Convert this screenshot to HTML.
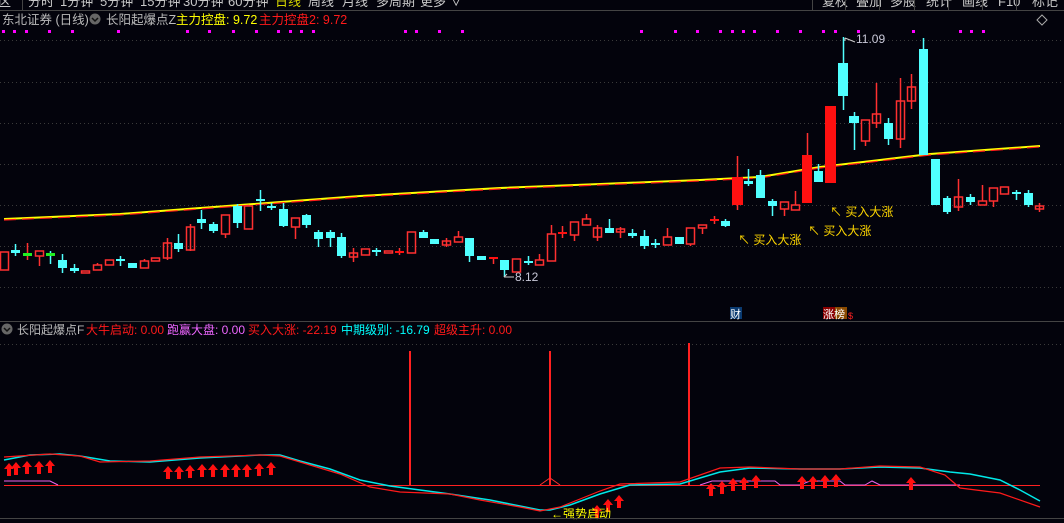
<!DOCTYPE html>
<html><head><meta charset="utf-8"><style>
body{margin:0;background:#03030c;width:1064px;height:523px;overflow:hidden;font-family:"Liberation Sans","Noto Sans CJK SC",sans-serif}
svg{display:block}
text{font-family:"Liberation Sans","Noto Sans CJK SC",sans-serif}
</style></head><body>
<svg width="1064" height="523" viewBox="0 0 1064 523" xmlns="http://www.w3.org/2000/svg">
<defs><path id="ar" d="M0 0l5 6h-3v7h-4v-7h-3z" fill="#ff1010"/></defs>
<rect width="1064" height="523" fill="#03030c"/>
<g font-size="13" fill="#c8c8c8">
<text x="-2" y="6">区</text><text x="28" y="6">分时</text><text x="60" y="6">1分钟</text><text x="100" y="6">5分钟</text><text x="140" y="6">15分钟</text><text x="183" y="6">30分钟</text><text x="228" y="6">60分钟</text><text x="275" y="6" fill="#d4d400">日线</text><text x="308" y="6">周线</text><text x="342" y="6">月线</text><text x="376" y="6">多周期</text><text x="420" y="6">更多 ∨</text>
<text x="822" y="6">复权</text><text x="856" y="6">叠加</text><text x="890" y="6">多股</text><text x="926" y="6">统计</text><text x="962" y="6">画线</text><text x="998" y="6">F10</text><text x="1032" y="6">标记</text>
</g>
<g stroke="#444" stroke-width="1"><line x1="0" y1="10.5" x2="1064" y2="10.5"/><line x1="22.5" y1="0" x2="22.5" y2="10"/><line x1="812.5" y1="0" x2="812.5" y2="10"/><line x1="845.5" y1="0" x2="845.5" y2="10"/><line x1="879.5" y1="0" x2="879.5" y2="10"/><line x1="914.5" y1="0" x2="914.5" y2="10"/><line x1="948.5" y1="0" x2="948.5" y2="10"/><line x1="982.5" y1="0" x2="982.5" y2="10"/><line x1="1016.5" y1="0" x2="1016.5" y2="10"/></g>
<g font-size="12.5">
<text x="2" y="24" fill="#bbb">东北证券 (日线)</text>
<circle cx="95" cy="19" r="5.5" fill="#666"/><path d="M92 18l3 3 3-3" stroke="#111" stroke-width="1.5" fill="none"/>
<text x="106" y="24" fill="#bbb">长阳起爆点Z</text>
<text x="176" y="24" fill="#ffff00">主力控盘: 9.72</text>
<text x="259" y="24" fill="#ff1a1a">主力控盘2: 9.72</text>
</g>
<path d="M1042 15l5 5-5 5-5-5z" stroke="#aaa" fill="none"/>
<g fill="#ff00ff">
<rect x="2" y="30" width="3" height="3"/><rect x="13" y="30" width="3" height="3"/><rect x="25" y="30" width="3" height="3"/><rect x="48" y="30" width="3" height="3"/><rect x="71" y="30" width="3" height="3"/><rect x="117" y="30" width="3" height="3"/><rect x="186" y="30" width="3" height="3"/><rect x="208" y="30" width="3" height="3"/><rect x="232" y="30" width="3" height="3"/><rect x="255" y="30" width="3" height="3"/><rect x="277" y="30" width="3" height="3"/><rect x="289" y="30" width="3" height="3"/><rect x="300" y="30" width="3" height="3"/><rect x="312" y="30" width="3" height="3"/><rect x="404" y="30" width="3" height="3"/><rect x="415" y="30" width="3" height="3"/><rect x="438" y="30" width="3" height="3"/><rect x="461" y="30" width="3" height="3"/>
<rect x="640" y="30" width="3" height="3"/><rect x="674" y="30" width="3" height="3"/><rect x="696" y="30" width="3" height="3"/><rect x="719" y="30" width="3" height="3"/><rect x="731" y="30" width="3" height="3"/><rect x="742" y="30" width="3" height="3"/><rect x="753" y="30" width="3" height="3"/><rect x="776" y="30" width="3" height="3"/><rect x="799" y="30" width="3" height="3"/><rect x="822" y="30" width="3" height="3"/><rect x="834" y="30" width="3" height="3"/><rect x="857" y="30" width="3" height="3"/><rect x="912" y="30" width="3" height="3"/><rect x="959" y="30" width="3" height="3"/><rect x="970" y="30" width="3" height="3"/><rect x="982" y="30" width="3" height="3"/>
</g>
<g stroke="#3a3a3a" stroke-dasharray="1 3"><line x1="0" y1="40.5" x2="1064" y2="40.5"/><line x1="0" y1="82.5" x2="1064" y2="82.5"/><line x1="0" y1="123.5" x2="1064" y2="123.5"/><line x1="0" y1="164.5" x2="1064" y2="164.5"/><line x1="0" y1="205.5" x2="1064" y2="205.5"/><line x1="0" y1="246.5" x2="1064" y2="246.5"/><line x1="0" y1="287.5" x2="1064" y2="287.5"/><line x1="0" y1="344.5" x2="1064" y2="344.5"/></g>
<polyline points="4,219 120,214 240,205 360,196 500,188 600,184 700,180 760,177 820,167 880,160 930,154 1040,146" stroke="#ffff00" stroke-width="2" fill="none"/>
<polyline points="4,220 120,215 240,206 360,197 500,189 600,185 700,181 760,178 820,168 880,161 930,155 1040,147" stroke="#ff1a1a" stroke-width="1.2" fill="none" stroke-dasharray="12 6"/>
<g stroke-width="1.5" fill="none">
<g stroke="#ff3030">
<rect x="0.5" y="252" width="8" height="18"/>
<line x1="27.5" y1="243" x2="27.5" y2="260"/>
<rect x="35.5" y="251" width="8" height="5"/><line x1="39.5" y1="256" x2="39.5" y2="266"/>
<rect x="81.5" y="271" width="8" height="2"/>
<rect x="93.5" y="265" width="8" height="5"/><line x1="97.5" y1="263" x2="97.5" y2="265"/>
<rect x="105.5" y="260" width="8" height="5"/>
<rect x="140.5" y="261" width="8" height="7"/><line x1="144.5" y1="259" x2="144.5" y2="261"/>
<rect x="151.5" y="258" width="8" height="3"/>
<rect x="163.5" y="243" width="8" height="15"/><line x1="167.5" y1="238" x2="167.5" y2="260"/>
<rect x="186.5" y="227" width="8" height="23"/><line x1="190.5" y1="224" x2="190.5" y2="251"/>
<rect x="221.5" y="215" width="8" height="19"/><line x1="225.5" y1="234" x2="225.5" y2="238"/>
<rect x="244.5" y="206" width="8" height="23"/>
<rect x="291.5" y="218" width="8" height="9"/><line x1="295.5" y1="227" x2="295.5" y2="239"/>
<rect x="349.5" y="253" width="8" height="4"/><line x1="353.5" y1="248" x2="353.5" y2="262"/>
<rect x="361.5" y="249" width="8" height="6"/>
<rect x="384.5" y="251" width="8" height="2"/>
<line x1="399.5" y1="248" x2="399.5" y2="255"/>
<rect x="407.5" y="232" width="8" height="21"/>
<rect x="442.5" y="241" width="8" height="4"/><line x1="446.5" y1="238" x2="446.5" y2="247"/>
<rect x="454.5" y="237" width="8" height="5"/><line x1="458.5" y1="231" x2="458.5" y2="237"/>
<line x1="493.5" y1="259" x2="493.5" y2="264"/>
<rect x="512.5" y="259" width="8" height="13"/>
<rect x="535.5" y="260" width="8" height="5"/><line x1="539.5" y1="254" x2="539.5" y2="260"/>
<rect x="547.5" y="234" width="8" height="27"/><line x1="551.5" y1="225" x2="551.5" y2="234"/>
<line x1="562.5" y1="226" x2="562.5" y2="238"/>
<rect x="570.5" y="222" width="8" height="13"/><line x1="574.5" y1="235" x2="574.5" y2="241"/>
<rect x="582.5" y="219" width="8" height="6"/><line x1="586.5" y1="214" x2="586.5" y2="219"/>
<rect x="593.5" y="228" width="8" height="9"/><line x1="597.5" y1="225" x2="597.5" y2="241"/>
<rect x="616.5" y="229" width="8" height="3"/><line x1="620.5" y1="227" x2="620.5" y2="238"/>
<rect x="663.5" y="237" width="8" height="8"/><line x1="667.5" y1="228" x2="667.5" y2="237"/>
<rect x="686.5" y="228" width="8" height="16"/><line x1="690.5" y1="244" x2="690.5" y2="246"/>
<rect x="698.5" y="225" width="8" height="3"/><line x1="702.5" y1="228" x2="702.5" y2="234"/>
<line x1="714.5" y1="216" x2="714.5" y2="224"/>
<line x1="737.5" y1="156" x2="737.5" y2="210"/>
<rect x="780.5" y="202" width="8" height="7"/><line x1="784.5" y1="209" x2="784.5" y2="216"/>
<rect x="791.5" y="205" width="8" height="5"/><line x1="795.5" y1="191" x2="795.5" y2="205"/>
<line x1="807.5" y1="133" x2="807.5" y2="155"/>
<rect x="861.5" y="120" width="8" height="21"/><line x1="865.5" y1="141" x2="865.5" y2="146"/>
<rect x="872.5" y="114" width="8" height="9"/><line x1="876.5" y1="83" x2="876.5" y2="128"/>
<rect x="896.5" y="101" width="8" height="38"/><line x1="900.5" y1="78" x2="900.5" y2="148"/>
<rect x="907.5" y="87" width="8" height="14"/><line x1="911.5" y1="74" x2="911.5" y2="109"/>
<rect x="954.5" y="197" width="8" height="10"/><line x1="958.5" y1="179" x2="958.5" y2="211"/>
<rect x="978.5" y="201" width="8" height="4"/><line x1="982.5" y1="185" x2="982.5" y2="201"/>
<rect x="989.5" y="188" width="8" height="13"/><line x1="993.5" y1="201" x2="993.5" y2="207"/>
<rect x="1000.5" y="187" width="8" height="7"/>
<rect x="1035.5" y="206" width="8" height="3"/><line x1="1039.5" y1="203" x2="1039.5" y2="212"/>
</g>
<g stroke="#50ffff">
<line x1="15.5" y1="244" x2="15.5" y2="256"/><line x1="50.5" y1="251" x2="50.5" y2="264"/><line x1="62.5" y1="254" x2="62.5" y2="273"/><line x1="74.5" y1="264" x2="74.5" y2="273"/><line x1="120.5" y1="256" x2="120.5" y2="266"/><line x1="178.5" y1="234" x2="178.5" y2="252"/><line x1="201.5" y1="210" x2="201.5" y2="229"/><line x1="213.5" y1="222" x2="213.5" y2="233"/><line x1="237.5" y1="204" x2="237.5" y2="228"/><line x1="260.5" y1="190" x2="260.5" y2="211"/><line x1="271.5" y1="203" x2="271.5" y2="210"/><line x1="283.5" y1="203" x2="283.5" y2="227"/><line x1="306.5" y1="214" x2="306.5" y2="228"/><line x1="318.5" y1="230" x2="318.5" y2="247"/><line x1="330.5" y1="230" x2="330.5" y2="247"/><line x1="341.5" y1="233" x2="341.5" y2="258"/><line x1="376.5" y1="248" x2="376.5" y2="256"/><line x1="423.5" y1="230" x2="423.5" y2="238"/><line x1="469.5" y1="238" x2="469.5" y2="262"/><line x1="504.5" y1="260" x2="504.5" y2="277"/><line x1="528.5" y1="256" x2="528.5" y2="265"/><line x1="609.5" y1="219" x2="609.5" y2="233"/><line x1="632.5" y1="229" x2="632.5" y2="238"/><line x1="644.5" y1="230" x2="644.5" y2="249"/><line x1="655.5" y1="239" x2="655.5" y2="248"/><line x1="725.5" y1="219" x2="725.5" y2="227"/><line x1="748.5" y1="169" x2="748.5" y2="186"/><line x1="760.5" y1="170" x2="760.5" y2="198"/><line x1="772.5" y1="199" x2="772.5" y2="216"/><line x1="818.5" y1="164" x2="818.5" y2="182"/><line x1="843.5" y1="37" x2="843.5" y2="110"/><line x1="854.5" y1="112" x2="854.5" y2="150"/><line x1="888.5" y1="118" x2="888.5" y2="145"/><line x1="923.5" y1="38" x2="923.5" y2="155"/><line x1="947.5" y1="196" x2="947.5" y2="214"/><line x1="970.5" y1="194" x2="970.5" y2="205"/><line x1="1016.5" y1="190" x2="1016.5" y2="200"/><line x1="1028.5" y1="190" x2="1028.5" y2="207"/>
</g>
</g>
<g fill="#50ffff">
<rect x="11" y="250" width="9" height="3"/><rect x="58" y="260" width="9" height="8"/><rect x="70" y="268" width="9" height="3"/><rect x="116" y="259" width="9" height="2"/><rect x="128" y="263" width="9" height="5"/><rect x="174" y="243" width="9" height="6"/><rect x="197" y="219" width="9" height="4"/><rect x="209" y="224" width="9" height="7"/><rect x="233" y="206" width="9" height="17"/><rect x="256" y="199" width="9" height="2"/><rect x="267" y="206" width="9" height="2"/><rect x="279" y="209" width="9" height="17"/><rect x="302" y="215" width="9" height="10"/><rect x="314" y="232" width="9" height="7"/><rect x="326" y="232" width="9" height="6"/><rect x="337" y="237" width="9" height="19"/><rect x="372" y="250" width="9" height="2"/><rect x="419" y="232" width="9" height="6"/><rect x="430" y="239" width="9" height="5"/><rect x="465" y="238" width="9" height="18"/><rect x="477" y="256" width="9" height="4"/><rect x="500" y="260" width="9" height="10"/><rect x="524" y="261" width="9" height="2"/><rect x="605" y="228" width="9" height="5"/><rect x="628" y="233" width="9" height="3"/><rect x="640" y="236" width="9" height="10"/><rect x="651" y="243" width="9" height="2"/><rect x="675" y="237" width="9" height="7"/><rect x="721" y="221" width="9" height="5"/><rect x="744" y="181" width="9" height="3"/><rect x="756" y="175" width="9" height="23"/><rect x="768" y="201" width="9" height="5"/><rect x="814" y="171" width="9" height="11"/><rect x="838" y="63" width="10" height="33"/><rect x="849" y="116" width="10" height="7"/><rect x="884" y="123" width="9" height="16"/><rect x="919" y="49" width="9" height="106"/><rect x="931" y="159" width="9" height="46"/><rect x="943" y="198" width="8" height="14"/><rect x="966" y="197" width="9" height="5"/><rect x="1012" y="192" width="9" height="2"/><rect x="1024" y="193" width="9" height="12"/>
</g>
<g fill="#22ee22"><rect x="23" y="253" width="9" height="3"/><rect x="46" y="253" width="9" height="3"/></g>
<g fill="#ff1010"><rect x="395" y="251" width="9" height="2"/><rect x="489" y="257" width="9" height="2"/><rect x="558" y="232" width="9" height="2"/><rect x="710" y="219" width="9" height="2"/><rect x="732" y="177" width="11" height="28"/><rect x="802" y="155" width="10" height="48"/><rect x="825" y="106" width="11" height="77"/></g>
<g font-size="12" fill="#c8c8d8"><text x="856" y="43">11.09</text><text x="515" y="281">8.12</text></g>
<path d="M845 38l10 4M845 38v3M504 277h10M504 277l3-3" stroke="#ccc" fill="none"/>
<g font-size="12" fill="#ffd700"><text x="738" y="244">↖ 买入大涨</text><text x="808" y="235">↖ 买入大涨</text><text x="830" y="216">↖ 买入大涨</text></g>
<rect x="730" y="307" width="12" height="12" fill="#0a3a70"/><text x="730" y="318" font-size="11" fill="#fff">财</text>
<rect x="823" y="307" width="12" height="12" fill="#8a0000"/><rect x="835" y="307" width="12" height="12" fill="#8a4a00"/><text x="823" y="318" font-size="11" fill="#fff">涨榜</text><text x="848" y="319" font-size="9" fill="#ff2020">$</text>
<line x1="0" y1="321.5" x2="1064" y2="321.5" stroke="#444"/>
<g font-size="12">
<circle cx="7" cy="329" r="5.5" fill="#666"/><path d="M4 328l3 3 3-3" stroke="#111" stroke-width="1.5" fill="none"/>
<text x="17" y="334" fill="#bbb">长阳起爆点F</text>
<text x="86" y="334" fill="#ff1a1a">大牛启动: 0.00</text>
<text x="167" y="334" fill="#ee66ff">跑赢大盘: 0.00</text>
<text x="248" y="334" fill="#ff1a1a">买入大涨: -22.19</text>
<text x="341" y="334" fill="#00ffff">中期级别: -16.79</text>
<text x="434" y="334" fill="#ff1a1a">超级主升: 0.00</text>
</g>
<line x1="4" y1="485.5" x2="1040" y2="485.5" stroke="#ff2020"/>
<g stroke="#ff2020" stroke-width="2"><line x1="410" y1="351" x2="410" y2="485"/><line x1="550" y1="351" x2="550" y2="485"/><line x1="689" y1="343" x2="689" y2="485"/></g>
<path d="M540 485l10-7 10 7" stroke="#ff3030" fill="none"/>
<polyline points="4,481 50,481 58,485" stroke="#ee66ee" fill="none"/>
<polyline points="700,485 712,481 775,481 780,485 800,485 810,481 840,481 845,485 865,485 872,481 880,485 960,485" stroke="#ee66ee" fill="none"/>
<polyline points="4,460 30,455 60,454 80,456 110,461 150,462 200,458 260,455 280,455 300,461 330,469 360,480 390,486 420,490 450,494 490,500 520,506 540,510 550,510 570,505 600,494 630,485 680,484 720,472 750,468 800,469 840,469 880,467 920,468 950,472 970,474 1000,480 1020,490 1040,501" stroke="#00e8e8" stroke-width="1.5" fill="none"/>
<polyline points="4,457 50,454 80,456 100,462 150,461 200,457 260,455 280,456 300,462 340,474 370,487 400,492 450,494 480,500 520,507 540,511 560,507 600,491 620,484 680,482 720,468 750,467 800,469 840,469 880,466 920,467 945,475 960,488 1000,493 1040,507" stroke="#ff1a1a" stroke-width="1.2" fill="none"/>
<g>
<use href="#ar" x="9" y="463"/><use href="#ar" x="16" y="462"/><use href="#ar" x="27" y="461"/><use href="#ar" x="39" y="461"/><use href="#ar" x="50" y="460"/>
<use href="#ar" x="168" y="466"/><use href="#ar" x="179" y="466"/><use href="#ar" x="190" y="465"/><use href="#ar" x="202" y="464"/><use href="#ar" x="213" y="464"/><use href="#ar" x="225" y="464"/><use href="#ar" x="236" y="464"/><use href="#ar" x="247" y="464"/><use href="#ar" x="259" y="463"/><use href="#ar" x="271" y="462"/>
<use href="#ar" x="597" y="505"/><use href="#ar" x="608" y="499"/><use href="#ar" x="619" y="495"/>
<use href="#ar" x="711" y="483"/><use href="#ar" x="722" y="481"/><use href="#ar" x="733" y="478"/><use href="#ar" x="744" y="477"/><use href="#ar" x="756" y="475"/><use href="#ar" x="802" y="476"/><use href="#ar" x="813" y="476"/><use href="#ar" x="825" y="475"/><use href="#ar" x="836" y="474"/><use href="#ar" x="911" y="477"/>
</g>
<text x="551" y="518" font-size="12" fill="#ffff00">←强势启动</text>
<line x1="0" y1="518.5" x2="1064" y2="518.5" stroke="#444"/>
</svg>
</body></html>
